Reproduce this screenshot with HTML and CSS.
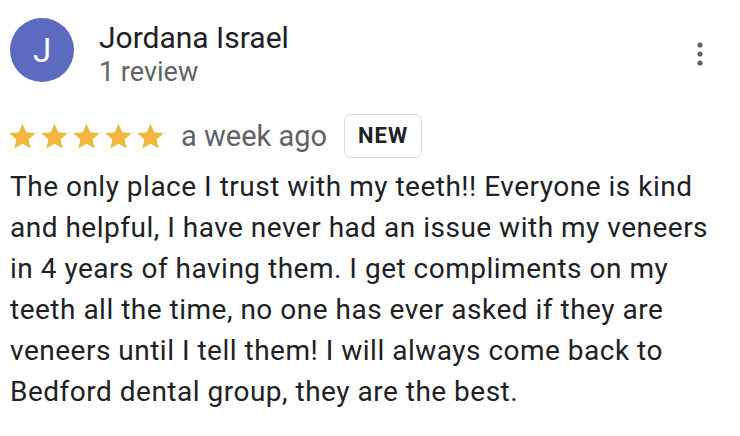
FILE: index.html
```html
<!DOCTYPE html>
<html lang="en">
<head>
    <meta charset="UTF-8">
    <title>Review</title>
    <link rel="stylesheet" href="styles.css">
</head>
<body>

<div class="review">
    <!-- Reviewer -->
    <div class="review-header">
        <div class="avatar">J</div>
        <div class="reviewer">
            <div class="reviewer-name">Jordana Israel</div>
            <div class="reviewer-meta">1 review</div>
        </div>
        <button class="menu-button" aria-label="More">
            <svg width="6" height="24" viewBox="0 0 6 24">
                <circle cx="3" cy="3" r="2.6" fill="#5f6368"/>
                <circle cx="3" cy="12" r="2.6" fill="#5f6368"/>
                <circle cx="3" cy="21" r="2.6" fill="#5f6368"/>
            </svg>
        </button>
    </div>

    <!-- Rating -->
    <div class="rating-row">
        <div class="stars">
            <svg viewBox="0 0 24 24"><path d="M12 2.2l2.95 6.6 7.2.7-5.45 4.8 1.6 7.05L12 17.7l-6.3 3.65 1.6-7.05L1.85 9.5l7.2-.7z"/></svg>
            <svg viewBox="0 0 24 24"><path d="M12 2.2l2.95 6.6 7.2.7-5.45 4.8 1.6 7.05L12 17.7l-6.3 3.65 1.6-7.05L1.85 9.5l7.2-.7z"/></svg>
            <svg viewBox="0 0 24 24"><path d="M12 2.2l2.95 6.6 7.2.7-5.45 4.8 1.6 7.05L12 17.7l-6.3 3.65 1.6-7.05L1.85 9.5l7.2-.7z"/></svg>
            <svg viewBox="0 0 24 24"><path d="M12 2.2l2.95 6.6 7.2.7-5.45 4.8 1.6 7.05L12 17.7l-6.3 3.65 1.6-7.05L1.85 9.5l7.2-.7z"/></svg>
            <svg viewBox="0 0 24 24"><path d="M12 2.2l2.95 6.6 7.2.7-5.45 4.8 1.6 7.05L12 17.7l-6.3 3.65 1.6-7.05L1.85 9.5l7.2-.7z"/></svg>
        </div>
        <span class="review-date">a week ago</span>
        <span class="badge">NEW</span>
    </div>

    <!-- Text -->
    <p class="review-text">The only place I trust with my teeth!! Everyone is kind and helpful, I have never had an issue with my veneers in 4 years of having them. I get compliments on my teeth all the time, no one has ever asked if they are veneers until I tell them! I will always come back to Bedford dental group, they are the best.</p>
</div>

</body>
</html>
```

FILE: styles.css
```css
body {
    margin: 0;
    background: #fff;
    font-family: Roboto, Arial, sans-serif;
    color: #202124;
}

.review {
    width: 720px;
    padding: 18px 10px 0 10px;
}

.review-header {
    display: flex;
    align-items: flex-start;
}

.avatar {
    width: 64px;
    height: 64px;
    border-radius: 50%;
    background-color: #5c6bc0;
    color: #fff;
    font-size: 33px;
    font-weight: 400;
    display: flex;
    align-items: center;
    justify-content: center;
    flex-shrink: 0;
}

.reviewer {
    margin-left: 25px;
    flex: 1;
    padding-top: 2px;
}

.reviewer-name {
    font-size: 30px;
    line-height: 36px;
    color: #202124;
}

.reviewer-meta {
    font-size: 27px;
    line-height: 32px;
    color: #5f6368;
}

.menu-button {
    background: none;
    border: none;
    padding: 0;
    margin-right: 27px;
    margin-top: 24px;
}

.rating-row {
    display: flex;
    align-items: center;
    margin-top: 26px;
}

.stars {
    display: flex;
    gap: 1px;
    margin-left: -3px;
}

.stars svg {
    width: 31px;
    height: 31px;
    fill: #f4b740;
}

.review-date {
    font-size: 29px;
    color: #5f6368;
    margin-left: 15px;
}

.badge {
    margin-left: 17px;
    border: 1px solid #dadce0;
    border-radius: 7px;
    padding: 8px 13px;
    font-size: 22px;
    line-height: 26px;
    font-weight: bold;
    letter-spacing: 1px;
    color: #202124;
}

.review-text {
    margin: 8px 0 0 0;
    font-size: 28px;
    letter-spacing: 0.5px;
    line-height: 41px;
    color: #202124;
}
```
